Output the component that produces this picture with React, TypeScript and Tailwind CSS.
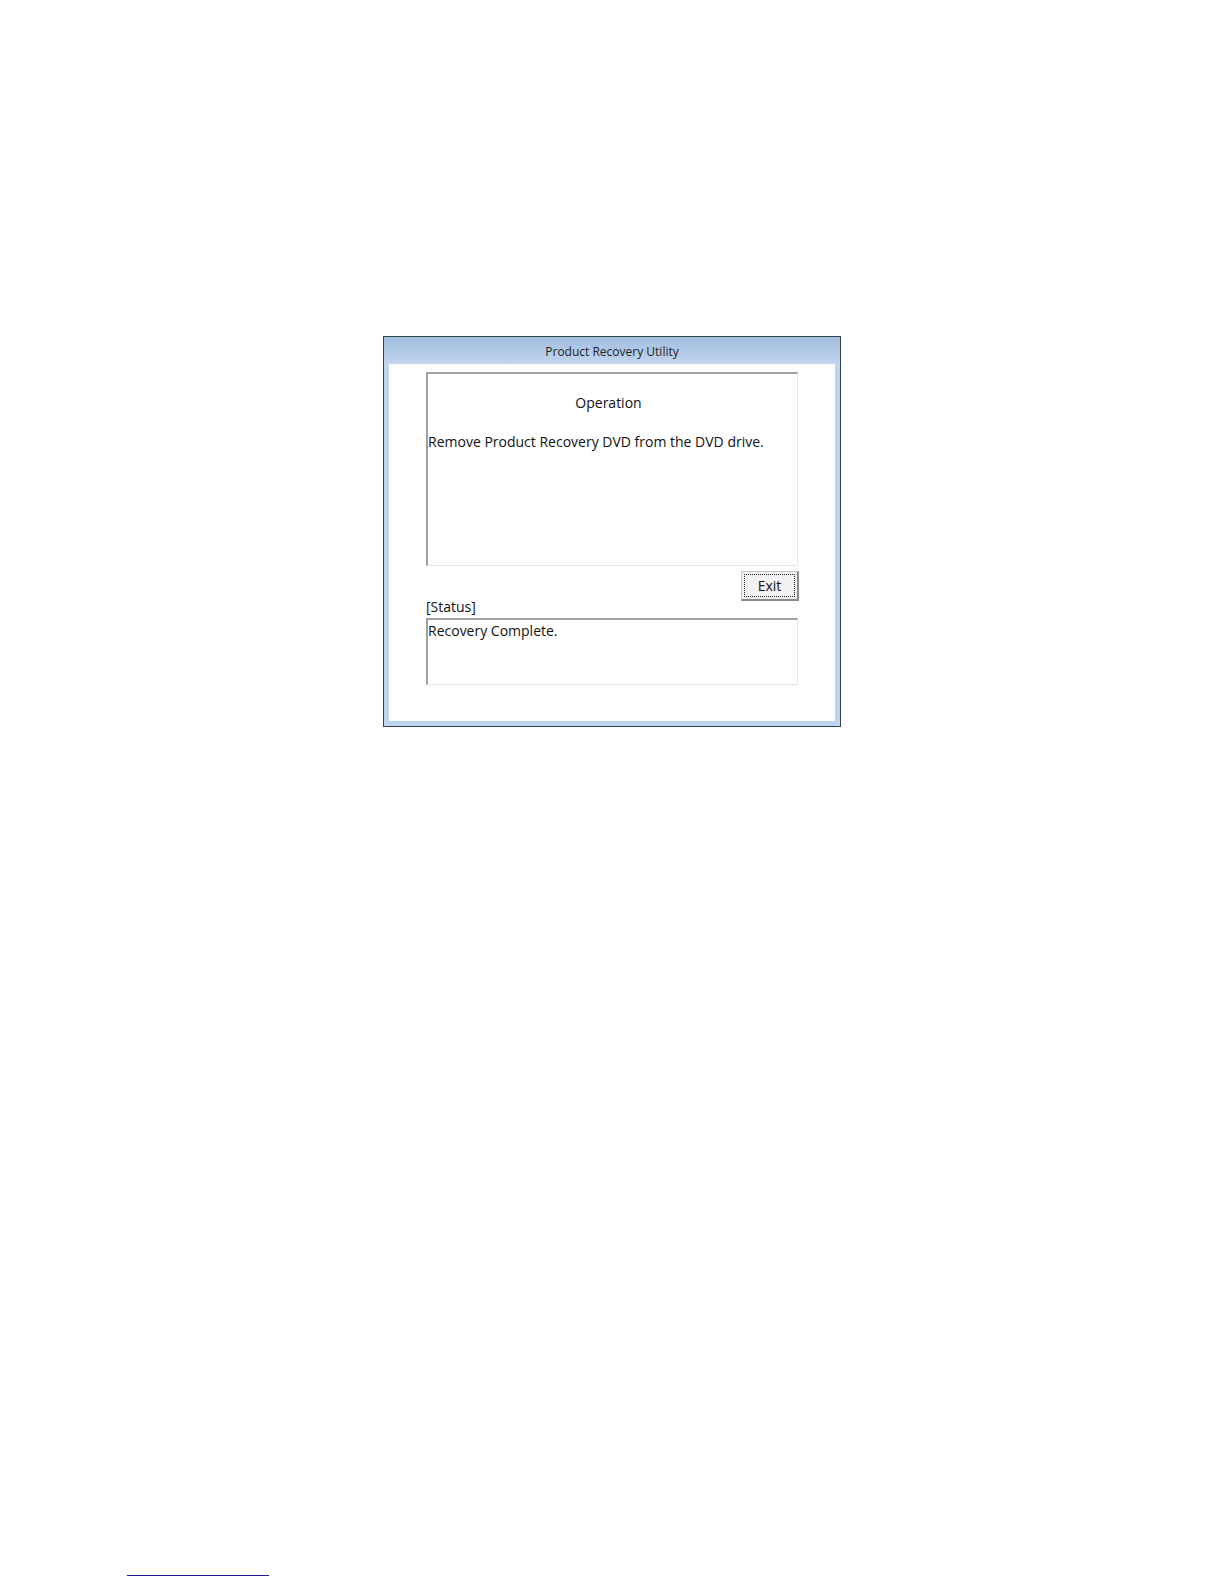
import React from 'react';

const font = { fontFamily: '"Open Sans", "Noto Sans", "Liberation Sans", sans-serif' };

function SunkenBox({ className, children }: { className: string; children?: React.ReactNode }) {
  return (
    <div className={`border-t-2 border-l-2 border-t-[#a0a0a0] border-l-[#a0a0a0] border-r border-b border-r-[#e3e3e3] border-b-[#e3e3e3] bg-white ${className}`}>
      {children}
    </div>
  );
}

export default function App() {
  return (
    <div className="w-[1224px] h-[1584px] bg-white flex flex-col" style={font}>
      {/* Dialog window */}
      <div className="pt-[336px] pl-[383px]">
        <div className="w-[458px] h-[391px] border border-[#34434f] bg-[#bed5ee] flex flex-col">
          {/* Title bar */}
          <div className="h-[27px] shrink-0 bg-gradient-to-b from-[#a4bee0] to-[#c0d5ee] flex items-center justify-center">
            <span className="text-[12px] text-[#1e1e1e] mt-[2px]">Product Recovery Utility</span>
          </div>

          {/* Client area */}
          <div className="flex-1 ml-[5px] mr-[5px] mb-[5px] bg-white pl-[37px] pt-[8px]">
            <SunkenBox className="w-[372px] h-[194px] flex flex-col">
              <div className="text-center text-[14px] text-[#111] mt-[19px] leading-[20px] pr-[8px]">Operation</div>
              <div className="text-[14px] text-[#111] mt-[19px] leading-[20px]">
                Remove Product Recovery DVD from the DVD drive.
              </div>
            </SunkenBox>

            <div className="w-[373px] flex justify-end mt-[5px]">
              <button className="w-[58px] h-[30px] bg-[#f3f1f3] border border-[#c8c8c8] border-r-[#8a8a8a] border-b-[#8a8a8a] border-r-2 border-b-2 p-[2px] cursor-default">
                <span className="w-full h-full border border-dotted border-[#222] flex items-center justify-center text-[14px] text-[#111] leading-none">
                  Exit
                </span>
              </button>
            </div>

            <div className="text-[14px] text-[#111] leading-[17px] -mt-[3px] mb-[3px]">[Status]</div>
            <SunkenBox className="w-[372px] h-[67px]">
              <div className="text-[14px] text-[#111] leading-[20px] mt-[1px]">Recovery Complete.</div>
            </SunkenBox>
          </div>
        </div>
      </div>

      {/* Footnote rule */}
      <div className="mt-[848px] ml-[127px] w-[142px] h-[1px] bg-[#1a1a9a]" />
    </div>
  );
}
